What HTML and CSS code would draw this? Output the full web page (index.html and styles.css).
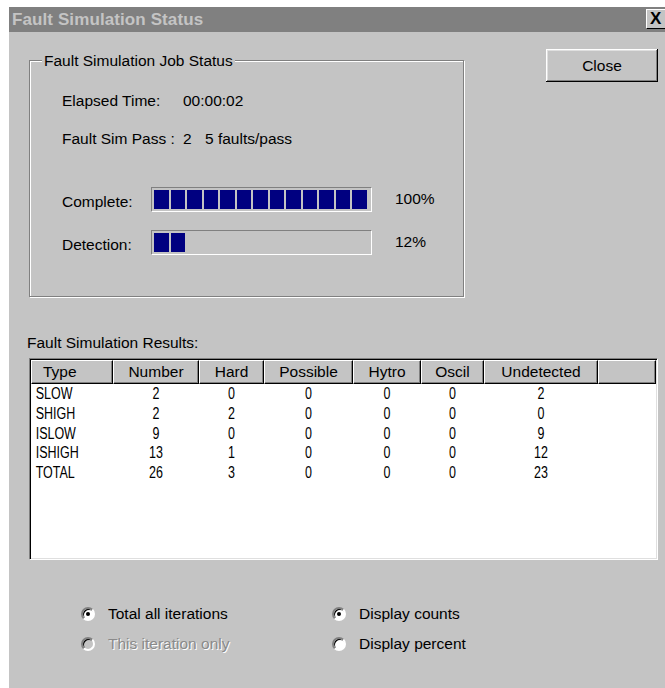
FILE: index.html
```html
<!DOCTYPE html>
<html>
<head>
<meta charset="utf-8">
<title>Fault Simulation Status</title>
<link rel="stylesheet" href="styles.css">
</head>
<body>
<div class="window">
  <div class="titlebar">
    <span class="title">Fault Simulation Status</span>
    <span class="title-x">X</span>
  </div>
  <div class="client">
    <div class="top">
      <div class="group">
        <span class="legend">Fault Simulation Job Status</span>
        <div class="info-row">
          <span class="info-label">Elapsed Time:</span>
          <span>00:00:02</span>
        </div>
        <div class="info-row second">
          <span class="info-label">Fault Sim Pass :</span>
          <span class="pass-num">2</span>
          <span>5 faults/pass</span>
        </div>
        <div class="progress">
          <span class="p-label">Complete:</span>
          <div class="bar">
            <i></i><i></i><i></i><i></i><i></i><i></i><i></i><i></i><i></i><i></i><i></i><i></i><i></i>
          </div>
          <span class="pct">100%</span>
          <span class="p-label">Detection:</span>
          <div class="bar">
            <i></i><i></i>
          </div>
          <span class="pct">12%</span>
        </div>
      </div>
      <button class="btn-close">Close</button>
    </div>

    <div class="results-label">Fault Simulation Results:</div>
    <div class="listview">
      <table>
        <colgroup>
          <col class="c-type"><col class="c-num"><col class="c-hard"><col class="c-poss">
          <col class="c-hytro"><col class="c-oscil"><col class="c-undet"><col>
        </colgroup>
        <thead>
          <tr>
            <th class="left">Type</th><th>Number</th><th>Hard</th><th>Possible</th>
            <th>Hytro</th><th>Oscil</th><th>Undetected</th><th></th>
          </tr>
        </thead>
        <tbody>
          <tr><td class="left">SLOW</td><td>2</td><td>0</td><td>0</td><td>0</td><td>0</td><td>2</td><td></td></tr>
          <tr><td class="left">SHIGH</td><td>2</td><td>2</td><td>0</td><td>0</td><td>0</td><td>0</td><td></td></tr>
          <tr><td class="left">ISLOW</td><td>9</td><td>0</td><td>0</td><td>0</td><td>0</td><td>9</td><td></td></tr>
          <tr><td class="left">ISHIGH</td><td>13</td><td>1</td><td>0</td><td>0</td><td>0</td><td>12</td><td></td></tr>
          <tr><td class="left">TOTAL</td><td>26</td><td>3</td><td>0</td><td>0</td><td>0</td><td>23</td><td></td></tr>
        </tbody>
      </table>
    </div>

    <div class="options">
      <label class="opt"><span class="radio on"></span>Total all iterations</label>
      <label class="opt"><span class="radio on"></span>Display counts</label>
      <label class="opt disabled"><span class="radio"></span>This iteration only</label>
      <label class="opt"><span class="radio"></span>Display percent</label>
    </div>
  </div>
</div>
</body>
</html>
```

FILE: styles.css
```css
html, body {
  margin: 0;
  padding: 0;
  background: #ffffff;
  overflow: hidden;
}

body {
  font-family: "Liberation Sans", Arial, sans-serif;
  font-size: 15.5px;
  color: #000;
}

.window {
  margin: 7px 0 0 9px;
  width: 656px;
  height: 681px;
  background: #c4c4c4;
  overflow: hidden;
}

/* caption bar */
.titlebar {
  height: 25px;
  background: #808080;
  display: flex;
  align-items: center;
  padding-left: 3px;
  position: relative;
  overflow: hidden;
}

.title {
  color: #c4c4c4;
  font-weight: bold;
  font-size: 17px;
  letter-spacing: 0.1px;
}

.title-x {
  position: absolute;
  left: 637px;
  top: 2px;
  width: 22px;
  height: 18px;
  background: #c4c4c4;
  border-top: 1px solid #fff;
  border-left: 1px solid #fff;
  border-bottom: 1px solid #000;
  font-weight: bold;
  font-size: 17px;
  line-height: 18px;
  padding-left: 3px;
  box-sizing: content-box;
}

/* top row: job status group + close button */
.top {
  display: flex;
  align-items: flex-start;
}

.group {
  position: relative;
  margin: 28px 0 0 20px;
  border: 1px solid #808080;
  box-shadow: 1px 1px 0 #fff, inset 1px 1px 0 #fff;
  padding: 30px 0 0 32px;
  box-sizing: content-box;
  width: 401px;
  height: 205px;
}

.legend {
  position: absolute;
  top: -10px;
  left: 12px;
  padding: 0 2px;
  background: #c4c4c4;
  line-height: 20px;
}

.info-row {
  display: flex;
  line-height: 20px;
}

.info-row.second {
  margin-top: 18px;
}

.info-label {
  width: 121px;
}

.pass-num {
  width: 22px;
}

.progress {
  margin-top: 38px;
  display: grid;
  grid-template-columns: 89px 221px auto;
  row-gap: 18px;
  align-items: center;
}

.p-label {
  position: relative;
  top: 2px;
}

.pct {
  position: relative;
  top: -1px;
  padding-left: 23px;
}

.bar {
  height: 19px;
  padding: 2px;
  border-top: 1px solid #808080;
  border-left: 1px solid #808080;
  border-bottom: 1px solid #fff;
  border-right: 1px solid #fff;
  display: flex;
  gap: 2px;
}

.bar i {
  display: block;
  width: 14.5px;
  height: 19px;
  background: #000080;
}

.btn-close {
  margin: 17px 7px 0 auto;
  width: 112px;
  height: 33px;
  background: #c4c4c4;
  font-family: inherit;
  font-size: 15.5px;
  color: #000;
  border: none;
  padding: 0;
  box-shadow: inset -1px -1px 0 #000, inset 1px 1px 0 #fff, inset -2px -2px 0 #808080, inset 2px 2px 0 #dfdfdf;
}

/* results list */
.results-label {
  margin: 36px 0 0 18px;
  line-height: 20px;
}

.listview {
  margin: 5px 7px 0 20px;
  height: 199px;
  background: #fff;
  border-top: 1px solid #808080;
  border-left: 1px solid #808080;
  border-right: 1px solid #fff;
  border-bottom: 1px solid #fff;
  box-shadow: inset 1px 1px 0 #000, inset -1px -1px 0 #dfdfdf;
  padding: 1px 1px 0 1px;
  overflow: hidden;
}

table {
  width: 100%;
  table-layout: fixed;
  border-collapse: separate;
  border-spacing: 0;
}

.c-type { width: 82px; }
.c-num { width: 86px; }
.c-hard { width: 65px; }
.c-poss { width: 89px; }
.c-hytro { width: 68px; }
.c-oscil { width: 63px; }
.c-undet { width: 114px; }

th {
  height: 22px;
  padding: 0;
  font-weight: normal;
  font-size: 15.5px;
  background: #c4c4c4;
  border-top: 1px solid #fff;
  border-left: 1px solid #fff;
  border-right: 1px solid #000;
  border-bottom: 1px solid #000;
  box-shadow: inset -1px -1px 0 #808080;
  text-align: center;
  white-space: nowrap;
}

th.left {
  text-align: left;
  padding-left: 11px;
}

/* list rows use a narrow face: squeeze the cell text horizontally */
td {
  padding: 0;
  height: 19.75px;
  line-height: 19.75px;
  font-size: 16px;
  text-align: center;
  transform: scaleX(0.78);
}

td.left {
  text-align: left;
  padding-left: 6px;
  transform-origin: left center;
}

/* radio options */
.options {
  margin: 39px 0 0 72px;
  display: grid;
  grid-template-columns: 251px auto;
  grid-auto-rows: 30px;
  align-items: center;
}

.opt {
  display: flex;
  align-items: center;
  gap: 13px;
}

.radio {
  position: relative;
  width: 10px;
  height: 10px;
  border-radius: 50%;
  border: 2px solid;
  border-color: #808080 #fff #fff #808080;
  background: #fff;
  box-shadow: inset 1px 1px 0 #000;
  flex: none;
}

.radio.on::after {
  content: "";
  position: absolute;
  left: 3px;
  top: 3px;
  width: 4px;
  height: 4px;
  border-radius: 50%;
  background: #000;
}

.opt.disabled {
  color: #8a8a8a;
  text-shadow: 1px 1px 0 #fff;
}

.opt.disabled .radio {
  background: #c4c4c4;
}
```
